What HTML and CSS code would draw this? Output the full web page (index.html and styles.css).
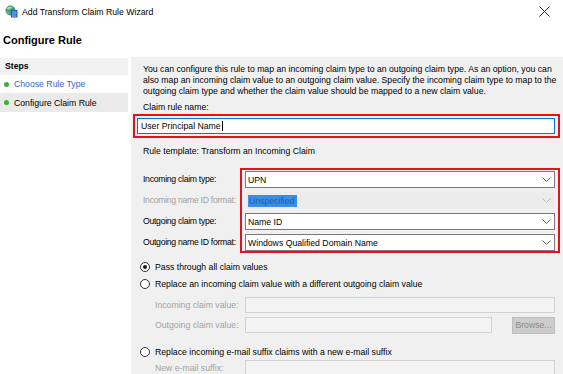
FILE: index.html
```html
<!DOCTYPE html>
<html lang="en">
<head>
    <meta charset="UTF-8">
    <title>Add Transform Claim Rule Wizard</title>
    <link rel="stylesheet" href="styles.css">
</head>
<body>

    <div class="titlebar">
        <svg class="app-icon" width="13" height="13" viewBox="0 0 13 13">
            <circle cx="5.5" cy="5.5" r="5" fill="#2a9d8f"/>
            <path d="M1.5 3.5 Q4 0.5 8 2 Q6 4 3 5 Z" fill="#e9c46a"/>
            <path d="M1 6.5 Q3 5.5 5 7.5 Q4 9.5 2.5 9 Z" fill="#8ab17d"/>
            <rect x="6" y="5" width="6.5" height="7.5" fill="#1f5fbf"/>
            <rect x="7" y="6.5" width="4.5" height="1" fill="#8fc1ff"/>
            <rect x="7" y="8.5" width="4.5" height="1" fill="#8fc1ff"/>
            <rect x="7" y="10.5" width="4.5" height="1" fill="#8fc1ff"/>
        </svg>
        <span class="title">Add Transform Claim Rule Wizard</span>
        <svg class="close" width="11" height="11" viewBox="0 0 11 11">
            <path d="M0.5 0.5 L10.5 10.5 M10.5 0.5 L0.5 10.5" stroke="#222" stroke-width="1"/>
        </svg>
    </div>

    <h1 class="page-title">Configure Rule</h1>

    <div class="wizard">
        <aside class="steps">
            <div class="steps-head">Steps</div>
            <div class="step done"><span class="dot"></span>Choose Rule Type</div>
            <div class="step current"><span class="dot"></span>Configure Claim Rule</div>
        </aside>

        <main class="content">
            <p class="intro">
                You can configure this rule to map an incoming claim type to an outgoing claim type. As an option, you can<br>
                also map an incoming claim value to an outgoing claim value. Specify the incoming claim type to map to the<br>
                outgoing claim type and whether the claim value should be mapped to a new claim value.
            </p>

            <div class="field-label">Claim rule name:</div>
            <div class="highlight name-box">
                <div class="textbox focused"><span class="caret">User Principal Name</span></div>
            </div>

            <div class="template">Rule template: Transform an Incoming Claim</div>

            <div class="mapping">
                <div class="map-labels">
                    <div class="map-label">Incoming claim type:</div>
                    <div class="map-label disabled">Incoming name ID format:</div>
                    <div class="map-label">Outgoing claim type:</div>
                    <div class="map-label">Outgoing name ID format:</div>
                </div>
                <div class="highlight combo-box">
                    <div class="combo"><span>UPN</span><svg class="chev" width="9" height="5" viewBox="0 0 9 5"><path d="M0.5 0.5 L4.5 4.5 L8.5 0.5" fill="none" stroke="#606060"/></svg></div>
                    <div class="combo off"><span class="selected">Unspecified</span><svg class="chev" width="9" height="5" viewBox="0 0 9 5"><path d="M0.5 0.5 L4.5 4.5 L8.5 0.5" fill="none" stroke="#b8b8b8"/></svg></div>
                    <div class="combo"><span>Name ID</span><svg class="chev" width="9" height="5" viewBox="0 0 9 5"><path d="M0.5 0.5 L4.5 4.5 L8.5 0.5" fill="none" stroke="#606060"/></svg></div>
                    <div class="combo"><span>Windows Qualified Domain Name</span><svg class="chev" width="9" height="5" viewBox="0 0 9 5"><path d="M0.5 0.5 L4.5 4.5 L8.5 0.5" fill="none" stroke="#606060"/></svg></div>
                </div>
            </div>

            <div class="radio-row first"><span class="radio checked"></span>Pass through all claim values</div>
            <div class="radio-row"><span class="radio"></span>Replace an incoming claim value with a different outgoing claim value</div>

            <div class="sub-row first">
                <span class="sub-label">Incoming claim value:</span>
                <div class="textbox off"></div>
            </div>
            <div class="sub-row">
                <span class="sub-label">Outgoing claim value:</span>
                <div class="textbox off"></div>
                <div class="browse">Browse...</div>
            </div>

            <div class="radio-row spaced"><span class="radio"></span>Replace incoming e-mail suffix claims with a new e-mail suffix</div>
            <div class="sub-row tight">
                <span class="sub-label">New e-mail suffix:</span>
                <div class="textbox off"></div>
            </div>
        </main>
    </div>

</body>
</html>
```

FILE: styles.css
```css
body {
    margin: 0;
    width: 563px;
    height: 374px;
    overflow: hidden;
    background-color: white;
    font-family: "Liberation Sans", Arial, sans-serif;
    font-size: 8.7px;
    color: #000;
}
.titlebar {
    display: flex;
    align-items: center;
    height: 23px;
    padding-left: 5px;
}
.app-icon {
    margin-right: 4px;
    margin-top: -1px;
}
.title {
    font-size: 8.7px;
    color: #000;
}
.close {
    margin-left: auto;
    margin-right: 13px;
}
.page-title {
    margin: 10px 0 10px 3px;
    font-size: 11px;
    line-height: 14px;
    font-weight: bold;
}
.wizard {
    display: flex;
    height: 317px;
}
.steps {
    width: 128px;
    margin-right: 3px;
}
.steps-head {
    height: 17px;
    line-height: 17px;
    margin-top: 1px;
    padding-left: 5px;
    background-color: #f2f2f2;
    font-weight: bold;
}
.step {
    display: flex;
    align-items: center;
    height: 18px;
    padding-left: 4px;
}
.step.done {
    color: #3366cc;
    background-color: white;
}
.step.current {
    height: 19px;
    background-color: #eaeaea;
}
.dot {
    width: 5px;
    height: 5px;
    border-radius: 50%;
    background-color: #3dae3d;
    margin-right: 5px;
}
.content {
    flex: 1;
    background-color: #f0f0f0;
    padding: 7px 3px 0 12px;
}
.intro {
    margin: 0;
    line-height: 11px;
}
.field-label {
    margin-top: 5px;
    line-height: 11px;
}
.highlight {
    border: 2px solid #e0141e;
}
.name-box {
    margin: 1px 0 0 -10px;
    padding: 2px 3px 2px 2px;
}
.textbox {
    height: 14px;
    line-height: 14px;
    background-color: white;
    border: 1px solid #7a7a7a;
    padding-left: 3px;
}
.textbox.focused {
    border-color: #0078d7;
}
.caret {
    border-right: 1px solid #000;
    padding-right: 1px;
}
.textbox.off {
    flex: 1;
    background-color: #f3f3f3;
    border-color: #d2d2d2;
}
.template {
    margin-top: 8px;
    line-height: 11px;
}
.mapping {
    display: flex;
    margin-top: 11px;
}
.map-labels {
    width: 97px;
    padding-top: 3px;
    display: flex;
    flex-direction: column;
    gap: 4px;
}
.map-label {
    height: 17px;
    line-height: 17px;
    white-space: nowrap;
    letter-spacing: -0.3px;
}
.disabled {
    color: #a3a3a3;
}
.combo-box {
    flex: 1;
    padding: 1px 3px 0 3px;
    display: flex;
    flex-direction: column;
    gap: 4px;
}
.combo {
    display: flex;
    align-items: center;
    height: 15px;
    background-color: white;
    border: 1px solid #7a7a7a;
    padding-left: 2px;
}
.combo .chev {
    margin-left: auto;
    margin-right: 3px;
}
.combo.off {
    background-color: #ececec;
    border-color: #ececec;
}
.selected {
    background-color: #3a8ee6;
    color: #1f5fb0;
    padding: 1px 3px 1px 1px;
}
.radio-row {
    display: flex;
    align-items: center;
    height: 14px;
    margin: 3px 0 0 -3px;
}
.radio-row.first {
    margin-top: 7px;
}
.radio-row.spaced {
    margin-top: 12px;
}
.radio {
    box-sizing: border-box;
    width: 10px;
    height: 10px;
    border: 1px solid #333;
    border-radius: 50%;
    background-color: white;
    margin-right: 5px;
    display: flex;
    align-items: center;
    justify-content: center;
}
.radio.checked::after {
    content: "";
    width: 4px;
    height: 4px;
    border-radius: 50%;
    background-color: #1a1a1a;
}
.sub-row {
    display: flex;
    align-items: center;
    height: 16px;
    margin: 4px 5px 0 12px;
}
.sub-row.first {
    margin-top: 6px;
}
.sub-row.tight {
    margin-top: 1px;
}
.sub-label {
    width: 90px;
    white-space: nowrap;
    color: #a3a3a3;
}
.browse {
    width: 41px;
    height: 15px;
    line-height: 15px;
    margin-left: 20px;
    text-align: center;
    background-color: #cccccc;
    border: 1px solid #bfbfbf;
    color: #8a8a8a;
}
```
